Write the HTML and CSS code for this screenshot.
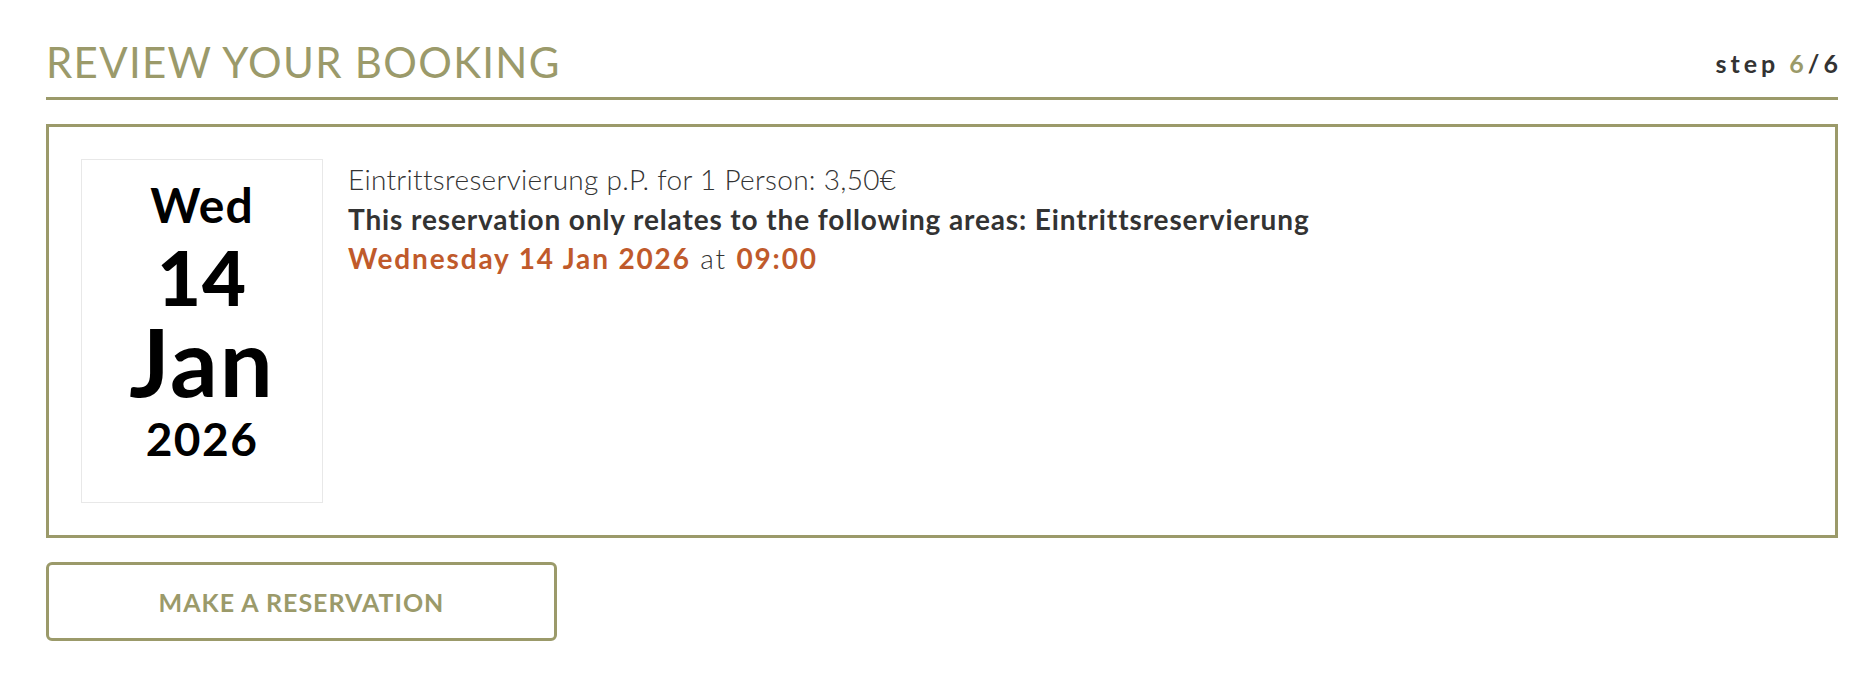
FILE: index.html
```html
<!DOCTYPE html>
<html lang="en">
<head>
<meta charset="utf-8">
<title>Review your booking</title>
<link rel="stylesheet" href="styles.css">
</head>
<body>
<main class="page">
  <header class="head">
    <h1 class="title">REVIEW YOUR BOOKING</h1>
    <div class="step">step <span class="step-cur">6</span>/6</div>
  </header>
  <section class="card">
    <div class="datebox">
      <div class="d-wd">Wed</div>
      <div class="d-day">14</div>
      <div class="d-mon">Jan</div>
      <div class="d-yr">2026</div>
    </div>
    <div class="info">
      <div class="l-price">Eintrittsreservierung p.P. for 1 Person: 3,50€</div>
      <div class="l-areas">This reservation only relates to the following areas: Eintrittsreservierung</div>
      <div class="l-when"><span class="hl">Wednesday 14 Jan 2026</span> at <span class="hl">09:00</span></div>
    </div>
  </section>
  <button class="btn" type="button">MAKE A RESERVATION</button>
</main>
</body>
</html>
```
FILE: styles.css
```css
html, body {
  margin: 0;
  padding: 0;
  background: #ffffff;
}
body {
  font-family: Lato, "Liberation Sans", sans-serif;
  color: #333333;
}
.page {
  padding: 0 34px 0 46px;
}
.head {
  display: flex;
  justify-content: space-between;
  align-items: flex-start;
  padding-top: 38px;
  padding-bottom: 11px;
  border-bottom: 3px solid #9b9a6a;
}
.title {
  margin: 0;
  font-size: 42px;
  line-height: 48px;
  font-weight: 400;
  letter-spacing: 1.3px;
  color: #9b9a6a;
}
.step {
  margin-top: 11px;
  font-size: 25px;
  line-height: 28px;
  font-weight: 700;
  letter-spacing: 4px;
  color: #333333;
  margin-right: -4px;
}
.step-cur {
  color: #9b9a6a;
}
.card {
  margin-top: 24px;
  border: 3px solid #9b9a6a;
  padding: 32px;
  display: flex;
  gap: 25px;
  align-items: flex-start;
}
.datebox {
  box-sizing: border-box;
  width: 242px;
  height: 344px;
  border: 1px solid #e8e8e8;
  padding-top: 15px;
  display: flex;
  flex-direction: column;
  align-items: center;
  color: #000000;
  font-weight: 700;
}
.d-wd {
  font-size: 48px;
  line-height: 60px;
  letter-spacing: 1px;
}
.d-day {
  font-size: 76px;
  line-height: 83px;
  font-weight: 900;
  letter-spacing: 1px;
}
.d-mon {
  font-size: 94px;
  line-height: 85px;
  font-weight: 700;
  letter-spacing: 2px;
}
.d-yr {
  font-size: 46px;
  line-height: 72px;
  letter-spacing: 1.5px;
}
.info {
  font-size: 28px;
  line-height: 40px;
}
.l-price {
  font-weight: 300;
  color: #333333;
  letter-spacing: 0.3px;
}
.l-areas {
  font-weight: 700;
  color: #333333;
  letter-spacing: 0.88px;
}
.l-when {
  font-weight: 300;
  color: #333333;
  line-height: 39px;
  letter-spacing: 1.85px;
}
.hl {
  font-weight: 700;
  color: #c05a2b;
}
.btn {
  display: block;
  margin-top: 24px;
  box-sizing: border-box;
  width: 511px;
  height: 79px;
  border: 3px solid #9b9a6a;
  border-radius: 6px;
  background: #ffffff;
  font-family: Lato, "Liberation Sans", sans-serif;
  font-size: 25px;
  font-weight: 700;
  letter-spacing: 1px;
  color: #9b9a6a;
  padding: 0;
}
```
